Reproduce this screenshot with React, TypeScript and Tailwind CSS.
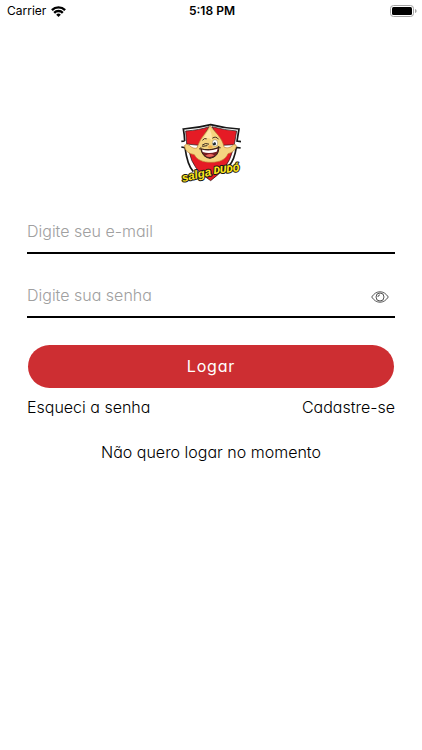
import { useState } from "react"
import type { InputHTMLAttributes, ReactNode } from "react"

interface FieldProps extends InputHTMLAttributes<HTMLInputElement> {
  label: string
  children?: ReactNode
}

function WifiIcon() {
  return (
    <svg className="h-[11px] w-[15px]" viewBox="0 0 15 11" fill="none" stroke="black" strokeWidth="2.4" aria-hidden="true">
      <path d="M0.9 4.1a9.4 9.4 0 0 1 13.2 0" />
      <path d="M3.2 6.8a6.1 6.1 0 0 1 8.6 0" />
      <path d="M7.5 11L5.2 8.7a3.3 3.3 0 0 1 4.6 0z" fill="black" stroke="none" />
    </svg>
  )
}

function BatteryIcon() {
  return (
    <svg className="h-3 w-[27px]" viewBox="0 0 27 12" aria-hidden="true">
      <rect x="0.5" y="0.5" width="23" height="11" rx="3" fill="white" stroke="#a3a3a3" />
      <rect x="2" y="2" width="20" height="8" rx="1.5" fill="black" />
      <path d="M25 4v4c1-.4 1.6-1.1 1.6-2S26 4.4 25 4z" fill="#a3a3a3" />
    </svg>
  )
}

function EyeIcon() {
  return (
    <svg className="h-3 w-[18px]" viewBox="0 0 18 12" fill="none" stroke="#555555" strokeWidth="1" aria-hidden="true">
      <path d="M0.7 6C3 2.5 5.8 0.8 9 0.8S15 2.5 17.3 6C15 9.5 12.2 11.2 9 11.2S3 9.5 0.7 6z" />
      <circle cx="9" cy="6" r="4" />
      <path d="M6.9 6A2.1 2.1 0 0 1 9 3.9" />
    </svg>
  )
}

function Logo() {
  return (
    <svg className="h-[60px] w-[60px] overflow-visible" viewBox="33 27 180 180" role="img" aria-label="Salga Dudó">
      {/* Shield */}
      <path d="M40 42Q84 39 122 29Q163 40 207 42L201 78L212 80L203 86L211 99L200 97Q190 158 122 203Q58 169 46 98L34 96L43 89L35 79L43 76z" fill="white" />
      <path d="M44 78Q43 57 40 42Q84 39 122 29Q163 40 207 42L201 78L213 80M44 78L34 79M34 96L45 98Q52 151 70 170M212 99L199 97Q193 135 178 151" fill="none" stroke="#171717" strokeWidth="5" />
      <path d="M47 48Q89 45 117 35L87 91L50 87z" fill="#e51b25" stroke="#171717" strokeWidth="2" />
      <path d="M126 35Q163 45 200 48L193 89L156 91z" fill="#e51b25" stroke="#171717" strokeWidth="2" />
      <path d="M58 112Q67 164 122 197Q176 158 187 110z" fill="#e51b25" stroke="#171717" strokeWidth="2" />

      {/* Mascot */}
      <path d="M120 32C111 52 92 66 84 91L81 99C74 102 64 98 58 91Q50 84 44 91Q43 108 62 116L73 119C81 135 99 142 123 142C150 142 167 133 174 116Q193 112 199 95Q200 87 191 89C183 98 170 101 162 96C157 68 135 52 120 32z" fill="#f5d580" stroke="#b97930" strokeWidth="2" />
      <path d="M119 42Q106 59 99 73Q116 64 126 76Q127 57 119 42z" fill="#ffe7a8" />
      <path d="M92 101Q116 109 147 97Q146 126 120 130Q98 128 92 101z" fill="#761c20" stroke="#302018" strokeWidth="3" />
      <path d="M96 104Q119 110 143 101L140 110Q117 117 98 111z" fill="white" />
      <path d="M106 122Q119 113 133 121Q120 131 106 122z" fill="#ec655c" />
      <path d="M97 90Q106 82 116 87M98 94L111 92M98 75Q103 68 109 71M128 69Q138 62 145 72M88 102L93 98M144 94L151 98" fill="none" stroke="#3d2c20" strokeWidth="3" strokeLinecap="round" />
      <ellipse cx="135" cy="84" rx="8" ry="10" fill="white" stroke="#554229" strokeWidth="1" />
      <circle cx="133" cy="86" r="5" fill="#19252d" />
      <circle cx="131" cy="83" r="2" fill="white" />
      <ellipse cx="121" cy="96" rx="7" ry="5" fill="#edae51" />

      {/* Name */}
      <g fontWeight="bold" fontStyle="italic" fill="#ffe51b" stroke="#171717" strokeWidth="6" paintOrder="stroke" strokeLinejoin="round">
        <text x="38" y="201" fontSize="35" fontFamily="Liberation Sans" transform="rotate(-13 38 201)">salga</text>
        <text x="132" y="177" fontSize="30" fontFamily="Roboto" fontWeight="900" transform="rotate(-6 132 177)">DUDÓ</text>
      </g>
    </svg>
  )
}

function Field({ label, children, ...props }: FieldProps) {
  return (
    <div className="flex h-10 items-start border-b-2 border-black">
      <input
        aria-label={label}
        placeholder={label}
        className="h-[34px] min-w-0 flex-1 bg-transparent leading-6 outline-none placeholder:text-[#a0a0a0]"
        {...props}
      />
      {children}
    </div>
  )
}

export default function App() {
  const [showPassword, setShowPassword] = useState(false)

  return (
    <div className="min-h-screen bg-white font-['Inter','Noto_Sans',sans-serif] text-base font-light text-black">
      <header className="grid h-[22px] grid-cols-3 items-center pr-[5px] pl-[7px] text-[12px]">
        <div className="flex items-center gap-[5px] font-normal">
          <span>Carrier</span>
          <WifiIcon />
        </div>
        <time className="text-center font-semibold">5:18 PM</time>
        <div className="flex justify-end">
          <BatteryIcon />
        </div>
      </header>

      <main className="px-[27px] pt-[102px] [font-feature-settings:'cv11']">
        <div className="flex justify-center">
          <Logo />
        </div>

        <form onSubmit={(e) => e.preventDefault()}>
          <div className="mt-[30px] flex flex-col gap-6">
            <Field label="Digite seu e-mail" type="email" name="email" autoComplete="email" />
            <Field
              label="Digite sua senha"
              type={showPassword ? "text" : "password"}
              name="password"
              autoComplete="current-password"
            >
              <button
                type="button"
                aria-label={showPassword ? "Ocultar senha" : "Mostrar senha"}
                className="mr-[6px] flex h-[38px] items-center"
                onClick={() => setShowPassword(!showPassword)}
              >
                <EyeIcon />
              </button>
            </Field>
          </div>
          <button type="submit" className="mx-px mt-[27px] flex h-[43px] w-[calc(100%-2px)] items-center justify-center rounded-full bg-[#cd2e32] pb-0.5 font-normal tracking-wider text-white">
            Logar
          </button>
        </form>

        <div className="mt-[7px] flex justify-between">
          <a href="#recuperar">Esqueci a senha</a>
          <a href="#cadastro">Cadastre-se</a>
        </div>
        <div className="mt-[21px] text-center">
          <a href="#inicio">Não quero logar no momento</a>
        </div>
      </main>
    </div>
  )
}
